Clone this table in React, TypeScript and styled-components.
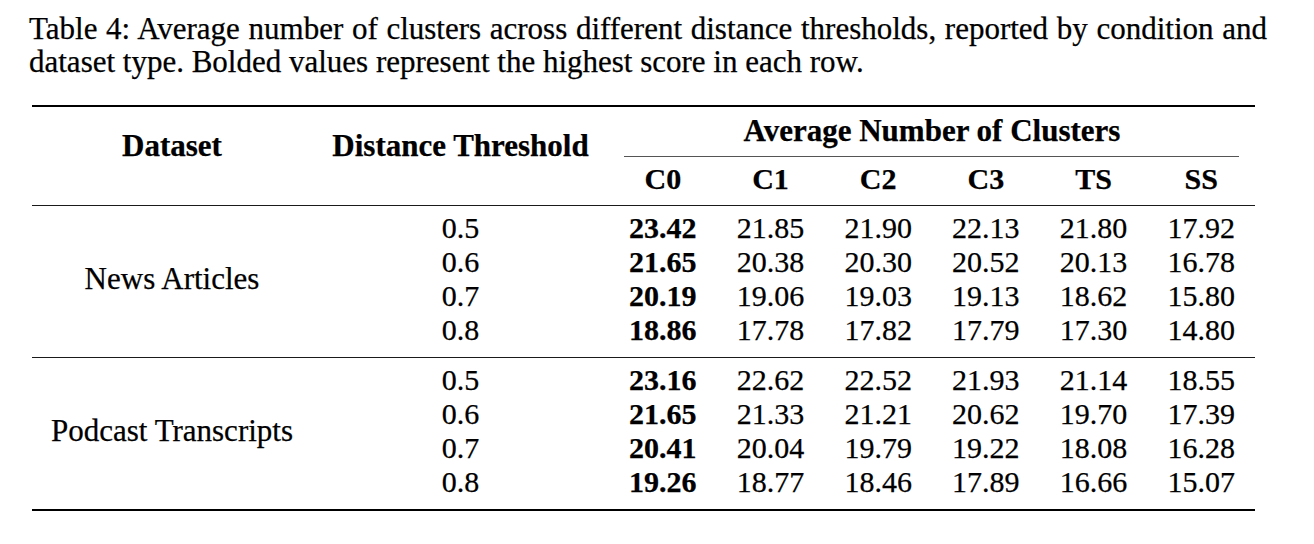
import React from "react";
import styled, { createGlobalStyle } from "styled-components";

const Global = createGlobalStyle`
  html, body { margin: 0; padding: 0; background: #fff; }
  body {
    font-family: "Liberation Serif", "Times New Roman", serif;
    color: #000;
    -webkit-text-stroke: 0.25px #000;
  }
`;

const Page = styled.div`
  padding-top: 12px;
  width: 1314px;
  height: 544px;
  box-sizing: border-box;
  overflow: hidden;
`;

const Caption = styled.div`
  margin-left: 29px;
  width: 1238px;
  font-size: 31px;
  line-height: 33.4px;
`;

const CaptionLine = styled.div<{ $justify?: boolean }>`
  text-align: ${(p) => (p.$justify ? "justify" : "left")};
  text-align-last: ${(p) => (p.$justify ? "justify" : "left")};
`;

const Table = styled.div`
  margin-left: 32px;
  margin-top: 26px;
  width: 1223px;
  display: flex;
  flex-direction: column;
  font-size: 30px;
`;

const Rule = styled.div<{ $heavy?: boolean }>`
  height: ${(p) => (p.$heavy ? "2px" : "1px")};
  background: ${(p) => (p.$heavy ? "#000" : "#1a1a1a")};
`;

const cols = "280px 297px repeat(6, 1fr)";

const Header = styled.div`
  display: grid;
  grid-template-columns: ${cols};
  grid-template-rows: 34px auto 34px;
  padding: 7px 0 9px;
  font-weight: bold;
  line-height: 34px;
`;

const SpanHead = styled.div<{ $col: number }>`
  grid-column: ${(p) => p.$col};
  grid-row: 1 / 4;
  align-self: start;
  padding-top: 15px;
  text-align: center;
  font-size: 31px;
`;

const GroupHead = styled.div`
  grid-column: 3 / -1;
  grid-row: 1;
  text-align: center;
  font-size: 31px;
`;

const CMidRule = styled.div`
  grid-column: 3 / -1;
  grid-row: 2;
  height: 1px;
  background: #555;
  margin: 8px 16px 5px 15px;
`;

const ColHead = styled.div`
  grid-row: 3;
  text-align: center;
`;

const Group = styled.div`
  display: grid;
  grid-template-columns: ${cols};
  grid-template-rows: repeat(4, 34px);
  padding: 5px 0 10px;
  line-height: 34px;
`;

const DatasetName = styled.div`
  grid-column: 1;
  grid-row: 1 / 5;
  align-self: center;
  text-align: center;
  font-size: 31px;
`;

const Cell = styled.div<{ $bold?: boolean }>`
  text-align: center;
  font-weight: ${(p) => (p.$bold ? "bold" : "normal")};
`;

type Row = { t: string; v: string[] };
type DataGroup = { name: string; rows: Row[] };

const groups: DataGroup[] = [
  {
    name: "News Articles",
    rows: [
      { t: "0.5", v: ["23.42", "21.85", "21.90", "22.13", "21.80", "17.92"] },
      { t: "0.6", v: ["21.65", "20.38", "20.30", "20.52", "20.13", "16.78"] },
      { t: "0.7", v: ["20.19", "19.06", "19.03", "19.13", "18.62", "15.80"] },
      { t: "0.8", v: ["18.86", "17.78", "17.82", "17.79", "17.30", "14.80"] },
    ],
  },
  {
    name: "Podcast Transcripts",
    rows: [
      { t: "0.5", v: ["23.16", "22.62", "22.52", "21.93", "21.14", "18.55"] },
      { t: "0.6", v: ["21.65", "21.33", "21.21", "20.62", "19.70", "17.39"] },
      { t: "0.7", v: ["20.41", "20.04", "19.79", "19.22", "18.08", "16.28"] },
      { t: "0.8", v: ["19.26", "18.77", "18.46", "17.89", "16.66", "15.07"] },
    ],
  },
];

const conditions = ["C0", "C1", "C2", "C3", "TS", "SS"];

export default function App() {
  return (
    <Page>
      <Global />
      <Caption>
        <CaptionLine $justify>
          Table 4: Average number of clusters across different distance thresholds, reported by condition and
        </CaptionLine>
        <CaptionLine>
          dataset type. Bolded values represent the highest score in each row.
        </CaptionLine>
      </Caption>
      <Table>
        <Rule $heavy />
        <Header>
          <SpanHead $col={1}>Dataset</SpanHead>
          <SpanHead $col={2}>Distance Threshold</SpanHead>
          <GroupHead>Average Number of Clusters</GroupHead>
          <CMidRule />
          {conditions.map((c) => (
            <ColHead key={c}>{c}</ColHead>
          ))}
        </Header>
        {groups.map((g) => (
          <React.Fragment key={g.name}>
            <Rule />
            <Group>
              <DatasetName>{g.name}</DatasetName>
              {g.rows.map((r) => (
                <React.Fragment key={r.t}>
                  <Cell>{r.t}</Cell>
                  {r.v.map((x, i) => (
                    <Cell key={i} $bold={i === 0}>
                      {x}
                    </Cell>
                  ))}
                </React.Fragment>
              ))}
            </Group>
          </React.Fragment>
        ))}
        <Rule $heavy />
      </Table>
    </Page>
  );
}
